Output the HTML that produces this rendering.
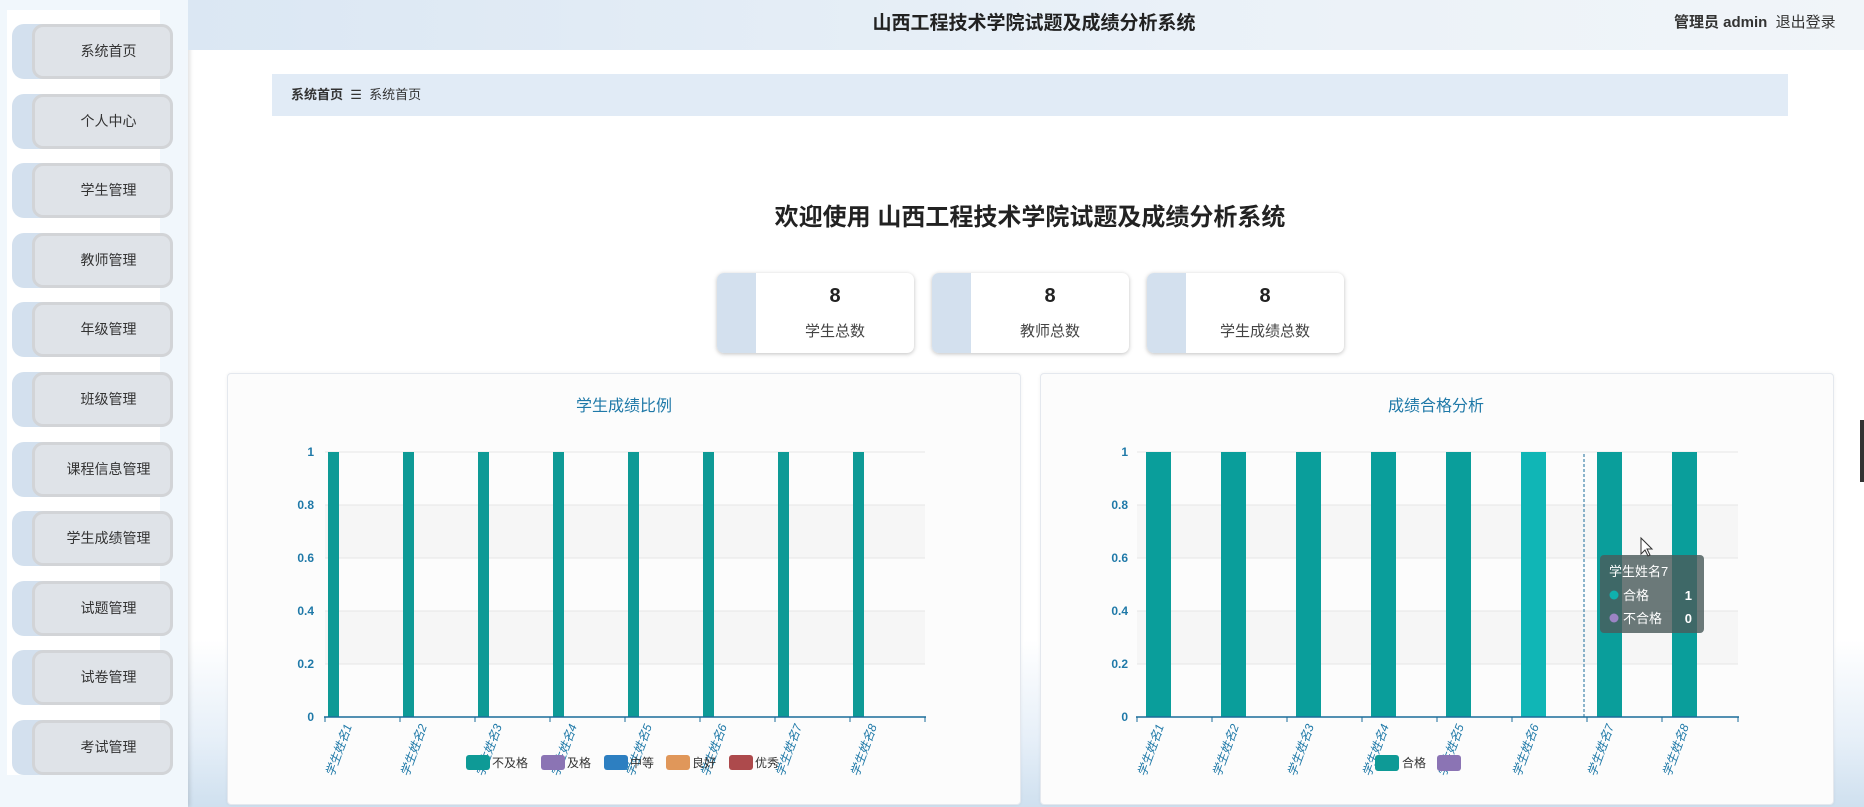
<!DOCTYPE html>
<html><head><meta charset="utf-8">
<style>
*{margin:0;padding:0;box-sizing:border-box}
body{width:1864px;height:807px;overflow:hidden;background:#fff;font-family:"Liberation Sans","Noto Sans CJK SC",sans-serif;position:relative;color:#333}
.abs{position:absolute}
#side{left:0;top:0;width:188px;height:807px;background:#f1f7fc;box-shadow:2px 0 4px rgba(0,0,0,.12)}
#sidew{left:7px;top:10px;width:153px;height:765px;background:#fff}
.mi{position:absolute;left:12px;width:161px;height:55px;background:#d3e0ee;border-radius:12px}
.mi div{position:absolute;left:20px;top:0;right:0;bottom:0;background:#dfe3e8;border:3px solid #d2d4d7;border-radius:11px;font-size:14px;color:#333;text-align:center;line-height:49px;padding-left:12px}
#head{left:188px;top:0;width:1676px;height:50px;background:linear-gradient(90deg,#dbe7f3,#eaf1f8 60%,#f1f5f9)}
#bc{left:272px;top:74px;width:1516px;height:42px;background:#e1ebf6;font-size:13px;line-height:42px;padding-left:19px}
.card{position:absolute;top:273px;width:197px;height:80px;background:#fff;border-radius:7px;box-shadow:0 1px 4px rgba(0,0,0,.25);overflow:hidden}
.card .s{position:absolute;left:0;top:0;width:39px;height:80px;background:#d3e0ee}
.card .n{position:absolute;left:39px;right:0;top:12px;text-align:center;font-size:20px;font-weight:bold;color:#222}
.card .l{position:absolute;left:39px;right:0;top:47px;text-align:center;font-size:15px;color:#444}
.panel{position:absolute;top:373px;height:432px;background:#fcfcfc;border:1px solid #e4e8ee;border-radius:4px;box-shadow:0 0 3px rgba(0,0,0,.06)}
</style></head><body>
<div class="abs" style="left:188px;top:640px;width:1676px;height:167px;background:linear-gradient(180deg,#fff,#e6eff8 60%,#cfe0ef)"></div>
<div class="abs" id="side"></div>
<div class="abs" id="sidew"></div>
<div class="mi" style="top:24px"><div>系统首页</div></div>
<div class="mi" style="top:94px"><div>个人中心</div></div>
<div class="mi" style="top:163px"><div>学生管理</div></div>
<div class="mi" style="top:233px"><div>教师管理</div></div>
<div class="mi" style="top:302px"><div>年级管理</div></div>
<div class="mi" style="top:372px"><div>班级管理</div></div>
<div class="mi" style="top:442px"><div>课程信息管理</div></div>
<div class="mi" style="top:511px"><div>学生成绩管理</div></div>
<div class="mi" style="top:581px"><div>试题管理</div></div>
<div class="mi" style="top:650px"><div>试卷管理</div></div>
<div class="mi" style="top:720px"><div>考试管理</div></div>

<div class="abs" id="head"></div>
<div class="abs" style="left:734px;top:8px;width:600px;text-align:center;font-size:19px;font-weight:bold;color:#222">山西工程技术学院试题及成绩分析系统</div>
<div class="abs" style="left:1674px;top:11px;font-size:15px;color:#333"><b>管理员 admin</b>&nbsp; 退出登录</div>

<div class="abs" id="bc"><b>系统首页</b>&nbsp; ☰&nbsp; 系统首页</div>

<div class="abs" style="left:625px;top:197px;width:810px;text-align:center;font-size:24px;font-weight:bold;color:#222">欢迎使用 山西工程技术学院试题及成绩分析系统</div>

<div class="card" style="left:717px"><div class="s"></div><div class="n">8</div><div class="l">学生总数</div></div>
<div class="card" style="left:932px"><div class="s"></div><div class="n">8</div><div class="l">教师总数</div></div>
<div class="card" style="left:1147px"><div class="s"></div><div class="n">8</div><div class="l">学生成绩总数</div></div>

<div class="panel" style="left:227px;width:794px"></div>
<div class="panel" style="left:1040px;width:794px"></div>

<svg class="abs" style="left:0;top:0" width="1864" height="807" font-family="Liberation Sans,Noto Sans CJK SC,sans-serif">
<text x="624" y="411" text-anchor="middle" font-size="16" fill="#1f79a8">学生成绩比例</text>
<text x="1436" y="411" text-anchor="middle" font-size="16" fill="#1f79a8">成绩合格分析</text>
<!-- left chart -->
<g>
<rect x="325" y="505" width="600" height="53" fill="#f6f6f6"/>
<rect x="325" y="611" width="600" height="53" fill="#f6f6f6"/>
<g stroke="#e6e6e6"><line x1="325" y1="452" x2="925" y2="452"/><line x1="325" y1="505" x2="925" y2="505"/><line x1="325" y1="558" x2="925" y2="558"/><line x1="325" y1="611" x2="925" y2="611"/><line x1="325" y1="664" x2="925" y2="664"/></g>
<g fill="#1f79a8" font-size="12" font-weight="bold" text-anchor="end"><text x="314" y="456">1</text><text x="314" y="509">0.8</text><text x="314" y="562">0.6</text><text x="314" y="615">0.4</text><text x="314" y="668">0.2</text><text x="314" y="721">0</text></g>
<g fill="#0e9a96"><rect x="328" y="452" width="11" height="265"/><rect x="403" y="452" width="11" height="265"/><rect x="478" y="452" width="11" height="265"/><rect x="553" y="452" width="11" height="265"/><rect x="628" y="452" width="11" height="265"/><rect x="703" y="452" width="11" height="265"/><rect x="778" y="452" width="11" height="265"/><rect x="853" y="452" width="11" height="265"/></g>
<line x1="324" y1="717" x2="926" y2="717" stroke="#1a6c9a" stroke-width="1.5"/>
<g stroke="#1a6c9a"><line x1="325" y1="717" x2="325" y2="722"/><line x1="400" y1="717" x2="400" y2="722"/><line x1="475" y1="717" x2="475" y2="722"/><line x1="550" y1="717" x2="550" y2="722"/><line x1="625" y1="717" x2="625" y2="722"/><line x1="700" y1="717" x2="700" y2="722"/><line x1="775" y1="717" x2="775" y2="722"/><line x1="850" y1="717" x2="850" y2="722"/><line x1="925" y1="717" x2="925" y2="722"/></g>
<g fill="#1f79a8" font-size="12" font-style="italic">
<text transform="translate(352,726) rotate(-70)" text-anchor="end">学生姓名1</text>
<text transform="translate(427,726) rotate(-70)" text-anchor="end">学生姓名2</text>
<text transform="translate(502,726) rotate(-70)" text-anchor="end">学生姓名3</text>
<text transform="translate(577,726) rotate(-70)" text-anchor="end">学生姓名4</text>
<text transform="translate(652,726) rotate(-70)" text-anchor="end">学生姓名5</text>
<text transform="translate(727,726) rotate(-70)" text-anchor="end">学生姓名6</text>
<text transform="translate(802,726) rotate(-70)" text-anchor="end">学生姓名7</text>
<text transform="translate(877,726) rotate(-70)" text-anchor="end">学生姓名8</text>
</g>
<g font-size="12" fill="#333">
<rect x="466" y="755" width="24" height="15" rx="3" fill="#0e9a96"/><text x="492" y="767">不及格</text>
<rect x="541" y="755" width="24" height="15" rx="3" fill="#8b74b4"/><text x="567" y="767">及格</text>
<rect x="604" y="755" width="24" height="15" rx="3" fill="#2d7fc1"/><text x="630" y="767">中等</text>
<rect x="666" y="755" width="24" height="15" rx="3" fill="#e0975a"/><text x="692" y="767">良好</text>
<rect x="729" y="755" width="24" height="15" rx="3" fill="#ad4a4c"/><text x="755" y="767">优秀</text>
</g>
</g>
<!-- right chart -->
<g>
<rect x="1137" y="505" width="601" height="53" fill="#f6f6f6"/>
<rect x="1137" y="611" width="601" height="53" fill="#f6f6f6"/>
<g stroke="#e6e6e6"><line x1="1137" y1="452" x2="1738" y2="452"/><line x1="1137" y1="505" x2="1738" y2="505"/><line x1="1137" y1="558" x2="1738" y2="558"/><line x1="1137" y1="611" x2="1738" y2="611"/><line x1="1137" y1="664" x2="1738" y2="664"/></g>
<g fill="#1f79a8" font-size="12" font-weight="bold" text-anchor="end"><text x="1128" y="456">1</text><text x="1128" y="509">0.8</text><text x="1128" y="562">0.6</text><text x="1128" y="615">0.4</text><text x="1128" y="668">0.2</text><text x="1128" y="721">0</text></g>
<g fill="#0a9e9b"><rect x="1146" y="452" width="25" height="265"/><rect x="1221" y="452" width="25" height="265"/><rect x="1296" y="452" width="25" height="265"/><rect x="1371" y="452" width="25" height="265"/><rect x="1446" y="452" width="25" height="265"/><rect x="1521" y="452" width="25" height="265" fill="#10b6b6"/><rect x="1597" y="452" width="25" height="265"/><rect x="1672" y="452" width="25" height="265"/></g>
<line x1="1584" y1="454" x2="1584" y2="717" stroke="#1a6c9a" stroke-dasharray="3,2"/>
<line x1="1136" y1="717" x2="1739" y2="717" stroke="#1a6c9a" stroke-width="1.5"/>
<g stroke="#1a6c9a"><line x1="1137" y1="717" x2="1137" y2="722"/><line x1="1212" y1="717" x2="1212" y2="722"/><line x1="1287" y1="717" x2="1287" y2="722"/><line x1="1362" y1="717" x2="1362" y2="722"/><line x1="1437" y1="717" x2="1437" y2="722"/><line x1="1512" y1="717" x2="1512" y2="722"/><line x1="1587" y1="717" x2="1587" y2="722"/><line x1="1662" y1="717" x2="1662" y2="722"/><line x1="1738" y1="717" x2="1738" y2="722"/></g>
<g fill="#1f79a8" font-size="12" font-style="italic">
<text transform="translate(1164,726) rotate(-70)" text-anchor="end">学生姓名1</text>
<text transform="translate(1239,726) rotate(-70)" text-anchor="end">学生姓名2</text>
<text transform="translate(1314,726) rotate(-70)" text-anchor="end">学生姓名3</text>
<text transform="translate(1389,726) rotate(-70)" text-anchor="end">学生姓名4</text>
<text transform="translate(1464,726) rotate(-70)" text-anchor="end">学生姓名5</text>
<text transform="translate(1539,726) rotate(-70)" text-anchor="end">学生姓名6</text>
<text transform="translate(1614,726) rotate(-70)" text-anchor="end">学生姓名7</text>
<text transform="translate(1689,726) rotate(-70)" text-anchor="end">学生姓名8</text>
</g>
<g font-size="12" fill="#333">
<rect x="1375" y="755" width="24" height="16" rx="3" fill="#0e9a96"/><text x="1402" y="767">合格</text>
<rect x="1437" y="755" width="24" height="16" rx="3" fill="#8b74b4"/>
</g>
<!-- tooltip -->
<rect x="1600" y="555" width="104" height="78" rx="4" fill="#4a5b5b" fill-opacity="0.82"/>
<g font-size="13" fill="#fff"><text x="1609" y="576">学生姓名7</text>
<circle cx="1614" cy="595" r="4.5" fill="#0fb0ad"/><text x="1623" y="600">合格</text><text x="1692" y="600" font-weight="bold" text-anchor="end">1</text>
<circle cx="1614" cy="618" r="4.5" fill="#9b84c4"/><text x="1623" y="623">不合格</text><text x="1692" y="623" font-weight="bold" text-anchor="end">0</text></g>
<path d="M1641 538 l0 16 l4 -4 l3 6 l2 -1 l-3 -6 l5 0 z" fill="#fff" stroke="#333" stroke-width="1"/>
</g>
<rect x="1860" y="420" width="4" height="62" fill="#333"/>
</svg>
</body></html>
